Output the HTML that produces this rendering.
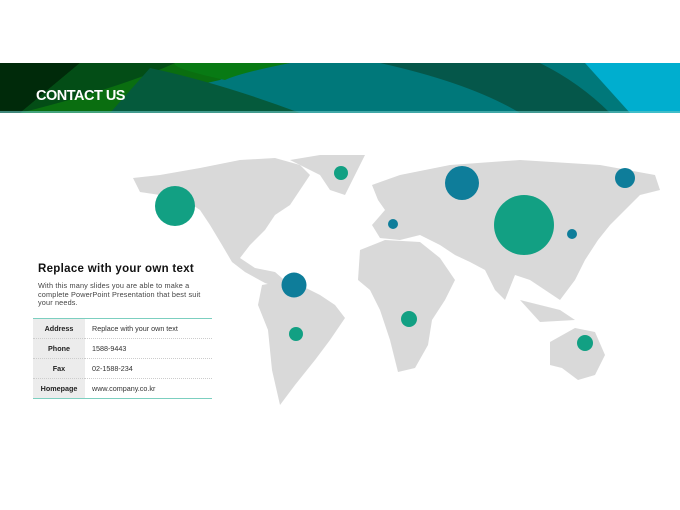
<!DOCTYPE html>
<html><head><style>
body{margin:0;width:680px;height:510px;background:#fff;position:relative;overflow:hidden;font-family:"Liberation Sans",sans-serif}
.hd{position:absolute;left:0;top:63px;width:680px;height:50px}
.title{position:absolute;left:36px;top:88px;color:#fff;font-weight:bold;font-size:14.5px;letter-spacing:-0.5px}
.panel{position:absolute;left:33px;top:258px;width:180px;background:#fff}
h2{margin:5px 0 0 5px;font-size:11.5px;font-weight:bold;color:#111;letter-spacing:0.3px;white-space:nowrap}
p{margin:7px 0 0 5px;font-size:7.3px;line-height:8.7px;color:#444;white-space:nowrap;letter-spacing:0.15px}
table{position:absolute;top:60px;left:0;width:179px;border-collapse:collapse;font-size:7.2px;border-top:1px solid #7ccfc0;border-bottom:1px solid #7ccfc0}
td{height:19px;border-bottom:1px dotted #ccc;color:#333;padding:0}
td.k{background:#ececec;width:52px;text-align:center;font-weight:bold;color:#222}
td.v{padding-left:7px}
</style></head><body>
<svg class="hd" width="680" height="50" viewBox="0 0 680 50">
<rect width="680" height="50" fill="#00787a"/>
<path d="M0 0H290Q230 10 220 17Q160 30 110 50H0Z" fill="#0a6e10"/>
<path d="M175 0H290Q240 10 225 17Q170 5 175 0Z" fill="#087a14"/>
<path d="M0 0H80L20 50H0Z" fill="#002a0a"/>
<path d="M80 0H175Q120 25 20 50Z" fill="#034d16"/>
<path d="M150 5Q220 20 300 50H110Z" fill="#055a3c"/>
<path d="M380 0H540Q590 25 620 50H520Q470 20 380 0Z" fill="#05574a"/>
<path d="M540 0H585L620 50H610Q580 20 540 0Z" fill="#00787a"/>
<path d="M585 0H680V50H630Z" fill="#00aecf"/>
<rect y="48" width="680" height="2" fill="#6ac7c4" opacity="0.6"/>
</svg>
<div class="title">CONTACT US</div>
<svg style="position:absolute;left:0;top:0" width="680" height="510">
<g fill="#d9d9d9">
<path d="M133 178L160 175L200 168L240 160L275 158L300 165L310 175L300 190L290 205L275 215L265 230L250 245L240 258L255 268L275 272L290 285L285 290L265 283L245 272L232 262L222 245L210 225L200 210L185 200L160 195L140 192Z"/>
<path d="M290 160L320 155L365 155L355 175L345 195L330 190L320 175Z"/>
<path d="M262 285L290 280L320 295L335 305L345 318L330 340L315 360L295 385L280 405L272 370L268 330L258 305Z"/>
<path d="M372 185L400 175L450 165L520 160L600 165L655 175L660 190L640 195L625 210L610 225L598 240L585 260L575 280L560 300L545 290L530 280L515 275L505 300L495 290L485 270L470 262L455 255L440 245L420 235L400 240L380 238L372 225L385 210L378 200Z"/>
<path d="M360 250L385 240L420 242L440 258L455 280L445 300L432 320L428 345L415 368L398 372L390 340L380 310L370 290L358 280Z"/>
<path d="M550 342L575 328L595 332L605 355L595 375L578 380L562 368L550 365Z"/>
<path d="M520 300L560 310L575 320L540 322Z"/>
</g>
<g fill="#12a083"><circle cx="175" cy="206" r="20"/><circle cx="341" cy="173" r="7"/><circle cx="296" cy="334" r="7"/><circle cx="409" cy="319" r="8"/><circle cx="524" cy="225" r="30"/><circle cx="585" cy="343" r="8"/></g>
<g fill="#0e7d9a"><circle cx="294" cy="285" r="12.5"/><circle cx="393" cy="224" r="5"/><circle cx="462" cy="183" r="17"/><circle cx="572" cy="234" r="5"/><circle cx="625" cy="178" r="10"/></g>
</svg>
<div class="panel" style="height:145px">
<h2>Replace with your own text</h2>
<p>With this many slides you are able to make a<br>complete PowerPoint Presentation that best suit<br>your needs.</p>
<table>
<tr><td class="k">Address</td><td class="v">Replace with your own text</td></tr>
<tr><td class="k">Phone</td><td class="v">1588-9443</td></tr>
<tr><td class="k">Fax</td><td class="v">02-1588-234</td></tr>
<tr><td class="k">Homepage</td><td class="v">www.company.co.kr</td></tr>
</table>
</div>
</body></html>
